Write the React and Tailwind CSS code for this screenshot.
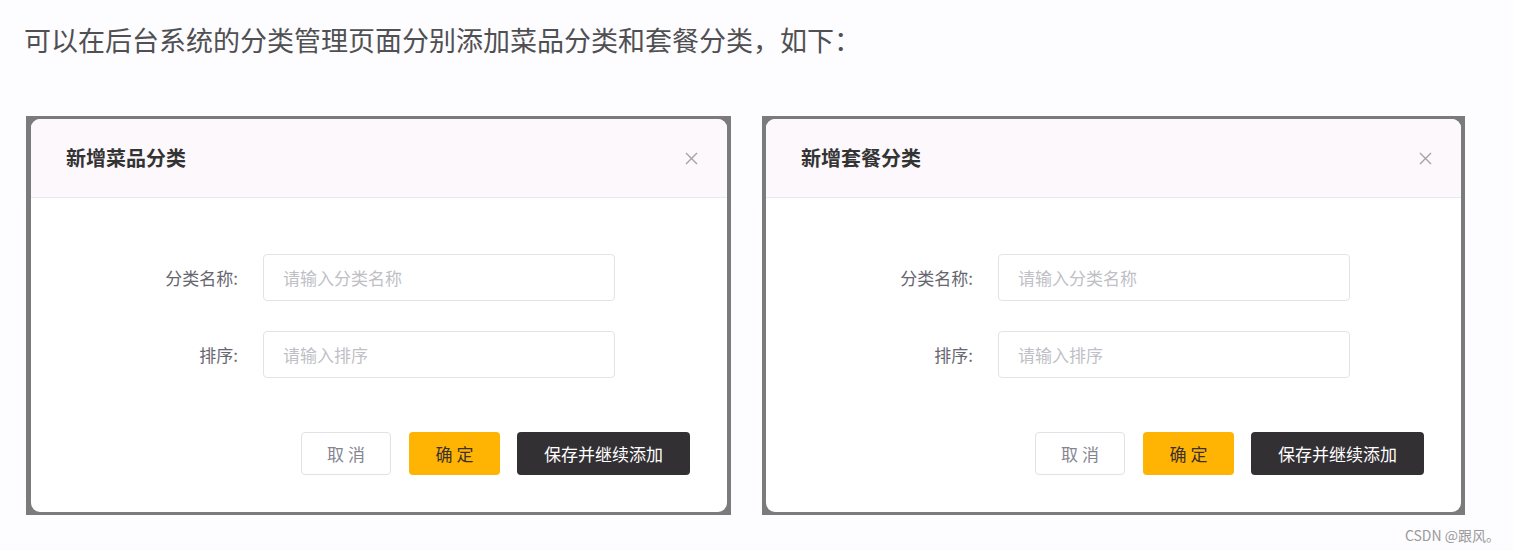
import React from 'react';

const font = { fontFamily: '"Noto Sans CJK SC", "Noto Sans", sans-serif' };

const Dialog = ({ title, frameClass }) => {
  return (
    <div className={`bg-[#7b7b7b] h-[399px] pt-[3px] pb-[3px] pr-[4px] ${frameClass}`}>
      <div className="h-full bg-white rounded-[9px] overflow-hidden flex flex-col">
        <div className="h-[79px] shrink-0 bg-[#fcf8fc] border-b border-[#ebe9ec] flex items-center justify-between pl-[35px] pr-[29px]">
          <span className="text-[20px] font-bold text-[#333]">{title}</span>
          <svg width="13" height="13" viewBox="0 0 13 13" className="text-[#a3a3a8]">
            <path d="M1 1L12 12M12 1L1 12" stroke="currentColor" strokeWidth="1.4" />
          </svg>
        </div>
        <div className="pt-[56px]">
          <div className="flex items-center">
            <label className="w-[207px] text-right text-[17px] text-[#666670]">分类名称:</label>
            <input
              type="text"
              placeholder="请输入分类名称"
              className="ml-[25px] w-[352px] h-[47px] border border-[#e3e2e6] rounded-[4px] px-[19px] text-[17px] placeholder:text-[#c0bfc6] outline-none bg-white"
            />
          </div>
          <div className="flex items-center mt-[30px]">
            <label className="w-[207px] text-right text-[17px] text-[#666670]">排序:</label>
            <input
              type="text"
              placeholder="请输入排序"
              className="ml-[25px] w-[352px] h-[47px] border border-[#e3e2e6] rounded-[4px] px-[19px] text-[17px] placeholder:text-[#c0bfc6] outline-none bg-white"
            />
          </div>
          <div className="flex justify-end mt-[54px] pr-[37px]">
            <button className="w-[90px] h-[43px] border border-[#e2e2e6] rounded-[4px] bg-white text-[17px] text-[#858592]">取 消</button>
            <button className="ml-[18px] w-[91px] h-[43px] rounded-[4px] bg-[#ffb302] text-[17px] text-[#3a3030]">确 定</button>
            <button className="ml-[17px] w-[173px] h-[43px] rounded-[4px] bg-[#333034] text-[17px] text-white">保存并继续添加</button>
          </div>
        </div>
      </div>
    </div>
  );
};

export default function App() {
  return (
    <div className="w-[1513px] h-[551px] bg-[#fdfcfe] overflow-hidden" style={font}>
      <p className="pl-[24px] pt-[24px] text-[27px] leading-[32px] text-[#505053]">
        可以在后台系统的分类管理页面分别添加菜品分类和套餐分类，如下：
      </p>
      <div className="flex pl-[26px] mt-[60px]">
        <Dialog title="新增菜品分类" frameClass="w-[705px] pl-[5px]" />
        <div className="ml-[31px]">
          <Dialog title="新增套餐分类" frameClass="w-[703px] pl-[4px]" />
        </div>
      </div>
      <div className="flex justify-end pr-[13px] mt-[11px]">
        <span className="text-[14px] leading-[18px] text-[#9a9a9a]">CSDN @跟风。</span>
      </div>
    </div>
  );
}
